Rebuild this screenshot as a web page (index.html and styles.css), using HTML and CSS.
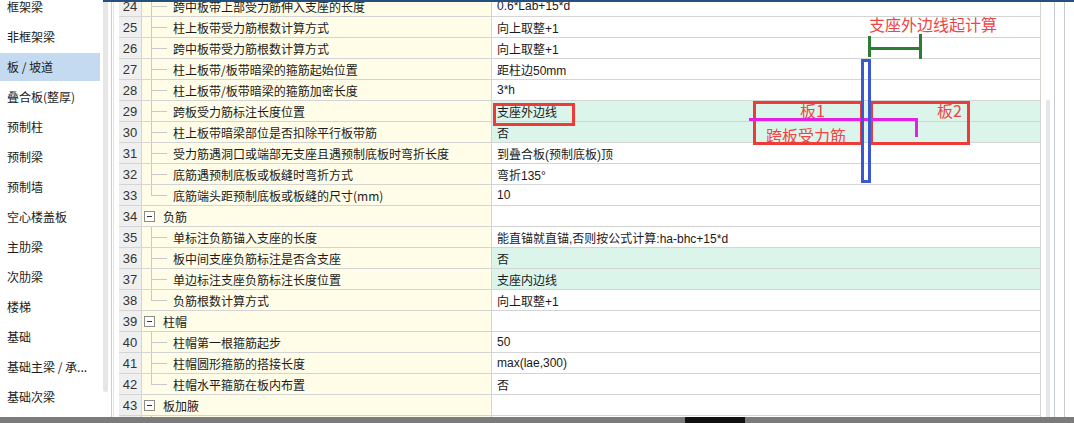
FILE: index.html
```html
<!DOCTYPE html>
<html lang="zh-CN">
<head>
    <meta charset="UTF-8">
    <meta name="viewport" content="width=device-width, initial-scale=1.0">
    <title>板 / 坡道 计算设置</title>
    <link rel="stylesheet" href="styles.css">
</head>
<body>
    <div class="sidebar">
        <ul class="nav">
            <li>框架梁</li>
            <li>非框架梁</li>
            <li class="active">板 / 坡道</li>
            <li>叠合板(整厚)</li>
            <li>预制柱</li>
            <li>预制梁</li>
            <li>预制墙</li>
            <li>空心楼盖板</li>
            <li>主肋梁</li>
            <li>次肋梁</li>
            <li>楼梯</li>
            <li>基础</li>
            <li>基础主梁 / 承...</li>
            <li>基础次梁</li>
        </ul>
    </div>

    <div class="main">
        <div class="nav-scroll"></div>
        <div class="split"></div>

        <div class="grid">
            <div class="row"><div class="num">24</div><div class="name child">跨中板带上部受力筋伸入支座的长度</div><div class="val">0.6*Lab+15*d</div></div>
            <div class="row"><div class="num">25</div><div class="name child">柱上板带受力筋根数计算方式</div><div class="val">向上取整+1</div></div>
            <div class="row"><div class="num">26</div><div class="name child">跨中板带受力筋根数计算方式</div><div class="val">向上取整+1</div></div>
            <div class="row"><div class="num">27</div><div class="name child">柱上板带/板带暗梁的箍筋起始位置</div><div class="val">距柱边50mm</div></div>
            <div class="row"><div class="num">28</div><div class="name child">柱上板带/板带暗梁的箍筋加密长度</div><div class="val">3*h</div></div>
            <div class="row"><div class="num">29</div><div class="name child">跨板受力筋标注长度位置</div><div class="val changed">支座外边线</div></div>
            <div class="row"><div class="num">30</div><div class="name child">柱上板带暗梁部位是否扣除平行板带筋</div><div class="val changed">否</div></div>
            <div class="row"><div class="num">31</div><div class="name child">受力筋遇洞口或端部无支座且遇预制底板时弯折长度</div><div class="val">到叠合板(预制底板)顶</div></div>
            <div class="row"><div class="num">32</div><div class="name child">底筋遇预制底板或板缝时弯折方式</div><div class="val">弯折135°</div></div>
            <div class="row"><div class="num">33</div><div class="name child last">底筋端头距预制底板或板缝的尺寸(mm)</div><div class="val">10</div></div>
            <div class="row"><div class="num">34</div><div class="name group"><span class="toggle"></span>负筋</div><div class="val"></div></div>
            <div class="row"><div class="num">35</div><div class="name child">单标注负筋锚入支座的长度</div><div class="val">能直锚就直锚,否则按公式计算:ha-bhc+15*d</div></div>
            <div class="row"><div class="num">36</div><div class="name child">板中间支座负筋标注是否含支座</div><div class="val changed">否</div></div>
            <div class="row"><div class="num">37</div><div class="name child">单边标注支座负筋标注长度位置</div><div class="val changed">支座内边线</div></div>
            <div class="row"><div class="num">38</div><div class="name child last">负筋根数计算方式</div><div class="val">向上取整+1</div></div>
            <div class="row"><div class="num">39</div><div class="name group"><span class="toggle"></span>柱帽</div><div class="val"></div></div>
            <div class="row"><div class="num">40</div><div class="name child">柱帽第一根箍筋起步</div><div class="val">50</div></div>
            <div class="row"><div class="num">41</div><div class="name child">柱帽圆形箍筋的搭接长度</div><div class="val">max(lae,300)</div></div>
            <div class="row"><div class="num">42</div><div class="name child last">柱帽水平箍筋在板内布置</div><div class="val">否</div></div>
            <div class="row"><div class="num">43</div><div class="name group"><span class="toggle"></span>板加腋</div><div class="val"></div></div>
            <div class="row"><div class="num"></div><div class="name child"></div><div class="val"></div></div>
        </div>

        <div class="vscroll">
            <div class="thumb"></div>
            <div class="rail"></div>
            <div class="rail far"></div>
        </div>
    </div>

    <!-- 标注 -->
    <div class="notes">
        <div class="mark val-mark"></div>
        <div class="mark slab1"></div>
        <div class="mark slab2"></div>
        <div class="label l-slab1">板1</div>
        <div class="label l-slab2">板2</div>
        <div class="label l-rebar">跨板受力筋</div>
        <div class="label l-start">支座外边线起计算</div>
        <div class="rebar-h"></div>
        <div class="rebar-v"></div>
        <div class="dim dim-left"></div>
        <div class="dim dim-right"></div>
        <div class="dim dim-bar"></div>
        <div class="support"></div>
    </div>

    <div class="strip"><span></span></div>
</body>
</html>
```

FILE: styles.css
```css
* {
    box-sizing: border-box;
}

body {
    margin: 0;
    height: 423px;
    overflow: hidden;
    display: flex;
    position: relative;
    background: #fff;
    font-family: "Noto Sans CJK SC", "Liberation Sans", sans-serif;
    font-size: 12px;
    color: #1a1a1a;
}

/* 左侧构件列表 */
.sidebar {
    width: 103px;
    flex: none;
}

.nav {
    list-style: none;
    margin: -7px 0 0 0;
    padding: 0;
    display: flex;
    flex-direction: column;
    gap: 2px;
}

.nav li {
    width: 100px;
    height: 28px;
    line-height: 28px;
    padding-left: 7px;
    white-space: nowrap;
}

.nav li.active {
    background-color: #c4daf1;
}

.main {
    flex: 1;
    display: flex;
    position: relative;
    height: 423px;
}

.main::before {
    content: "";
    position: absolute;
    top: 0;
    left: 0;
    right: 0;
    height: 2px;
    background: #24507f;
    z-index: 2;
}

.nav-scroll {
    width: 5px;
    height: 392px;
    background: #e6e6e6;
    border-radius: 0 0 3px 3px;
}

.split {
    width: 3px;
    margin: 0 5px 0 3px;
    border-left: 1px solid #cdcdcd;
    border-right: 1px solid #e2e2e2;
}

/* 属性表 */
.grid {
    width: 922px;
    margin-top: -4px;
    display: flex;
    flex-direction: column;
}

.row {
    display: grid;
    grid-template-columns: 23px 350px 549px;
    height: 21px;
    flex: none;
}

.row > div {
    border-bottom: 1px solid #d4d4d4;
    border-right: 1px solid #d4d4d4;
    display: flex;
    align-items: center;
    white-space: nowrap;
    overflow: hidden;
}

.num {
    justify-content: center;
    background: #efefef;
    font-family: "Liberation Sans", sans-serif;
    font-size: 13px;
    color: #333;
}

.name {
    background-color: #fffde7;
}

.name.child {
    padding-left: 31px;
    background:
        linear-gradient(#c9c9c9, #c9c9c9) 9px 0 / 1px 100% no-repeat,
        linear-gradient(#c9c9c9, #c9c9c9) 10px 10px / 15px 1px no-repeat,
        #fffde7;
}

.name.child.last {
    background:
        linear-gradient(#c9c9c9, #c9c9c9) 9px 0 / 1px 11px no-repeat,
        linear-gradient(#c9c9c9, #c9c9c9) 10px 10px / 15px 1px no-repeat,
        #fffde7;
}

.name.group {
    padding-left: 2px;
}

.toggle {
    width: 11px;
    height: 11px;
    margin-right: 8px;
    border: 1px solid #8c8c8c;
    background: linear-gradient(#333, #333) center / 5px 1px no-repeat, #fff;
}

.val {
    padding-left: 5px;
    background: #fff;
    font-family: "Liberation Sans", "Noto Sans CJK SC", sans-serif;
}

.val.changed {
    background-color: #dcf5eb;
}

.vscroll {
    display: flex;
    padding-left: 5px;
}

.thumb {
    width: 4px;
    margin-top: 100px;
    background: #e6e6e6;
}

.rail {
    width: 1px;
    margin-left: 4px;
    background: #c6cad1;
}

.rail.far {
    margin-left: 9px;
}

/* 截图上的标注 */
.notes {
    position: absolute;
    top: 0;
    left: 0;
    width: 100%;
    height: 100%;
    pointer-events: none;
}

.notes > div {
    position: absolute;
}

.mark {
    border: 3px solid #ef3a3a;
}

.val-mark {
    left: 493px;
    top: 103px;
    width: 82px;
    height: 23px;
}

.slab1 {
    left: 753px;
    top: 101px;
    width: 110px;
    height: 44px;
}

.slab2 {
    left: 870px;
    top: 101px;
    width: 100px;
    height: 44px;
}

.label {
    font-size: 16px;
    line-height: 16px;
    color: #ef4545;
    white-space: nowrap;
}

.l-slab1 {
    left: 800px;
    top: 102px;
}

.l-slab2 {
    left: 937px;
    top: 102px;
}

.l-rebar {
    left: 766px;
    top: 127px;
}

.l-start {
    left: 869px;
    top: 16px;
}

.rebar-h {
    left: 749px;
    top: 118px;
    width: 169px;
    height: 3px;
    background: #e51fe5;
}

.rebar-v {
    left: 915px;
    top: 118px;
    width: 3px;
    height: 19px;
    background: #e51fe5;
}

.dim {
    background: #2e7d32;
}

.dim-left {
    left: 868px;
    top: 36px;
    width: 3px;
    height: 21px;
}

.dim-right {
    left: 919px;
    top: 34px;
    width: 3px;
    height: 25px;
}

.dim-bar {
    left: 868px;
    top: 47px;
    width: 54px;
    height: 3px;
}

.support {
    left: 861px;
    top: 59px;
    width: 10px;
    height: 124px;
    border: 3px solid #3b58cf;
}

/* 底部被遮住的窗口边 */
.strip {
    position: absolute;
    left: 0;
    right: 0;
    bottom: 0;
    height: 6px;
    background: #7b7b7b;
}

.strip span {
    position: absolute;
    left: 685px;
    width: 60px;
    height: 6px;
    background: #111;
}
```
